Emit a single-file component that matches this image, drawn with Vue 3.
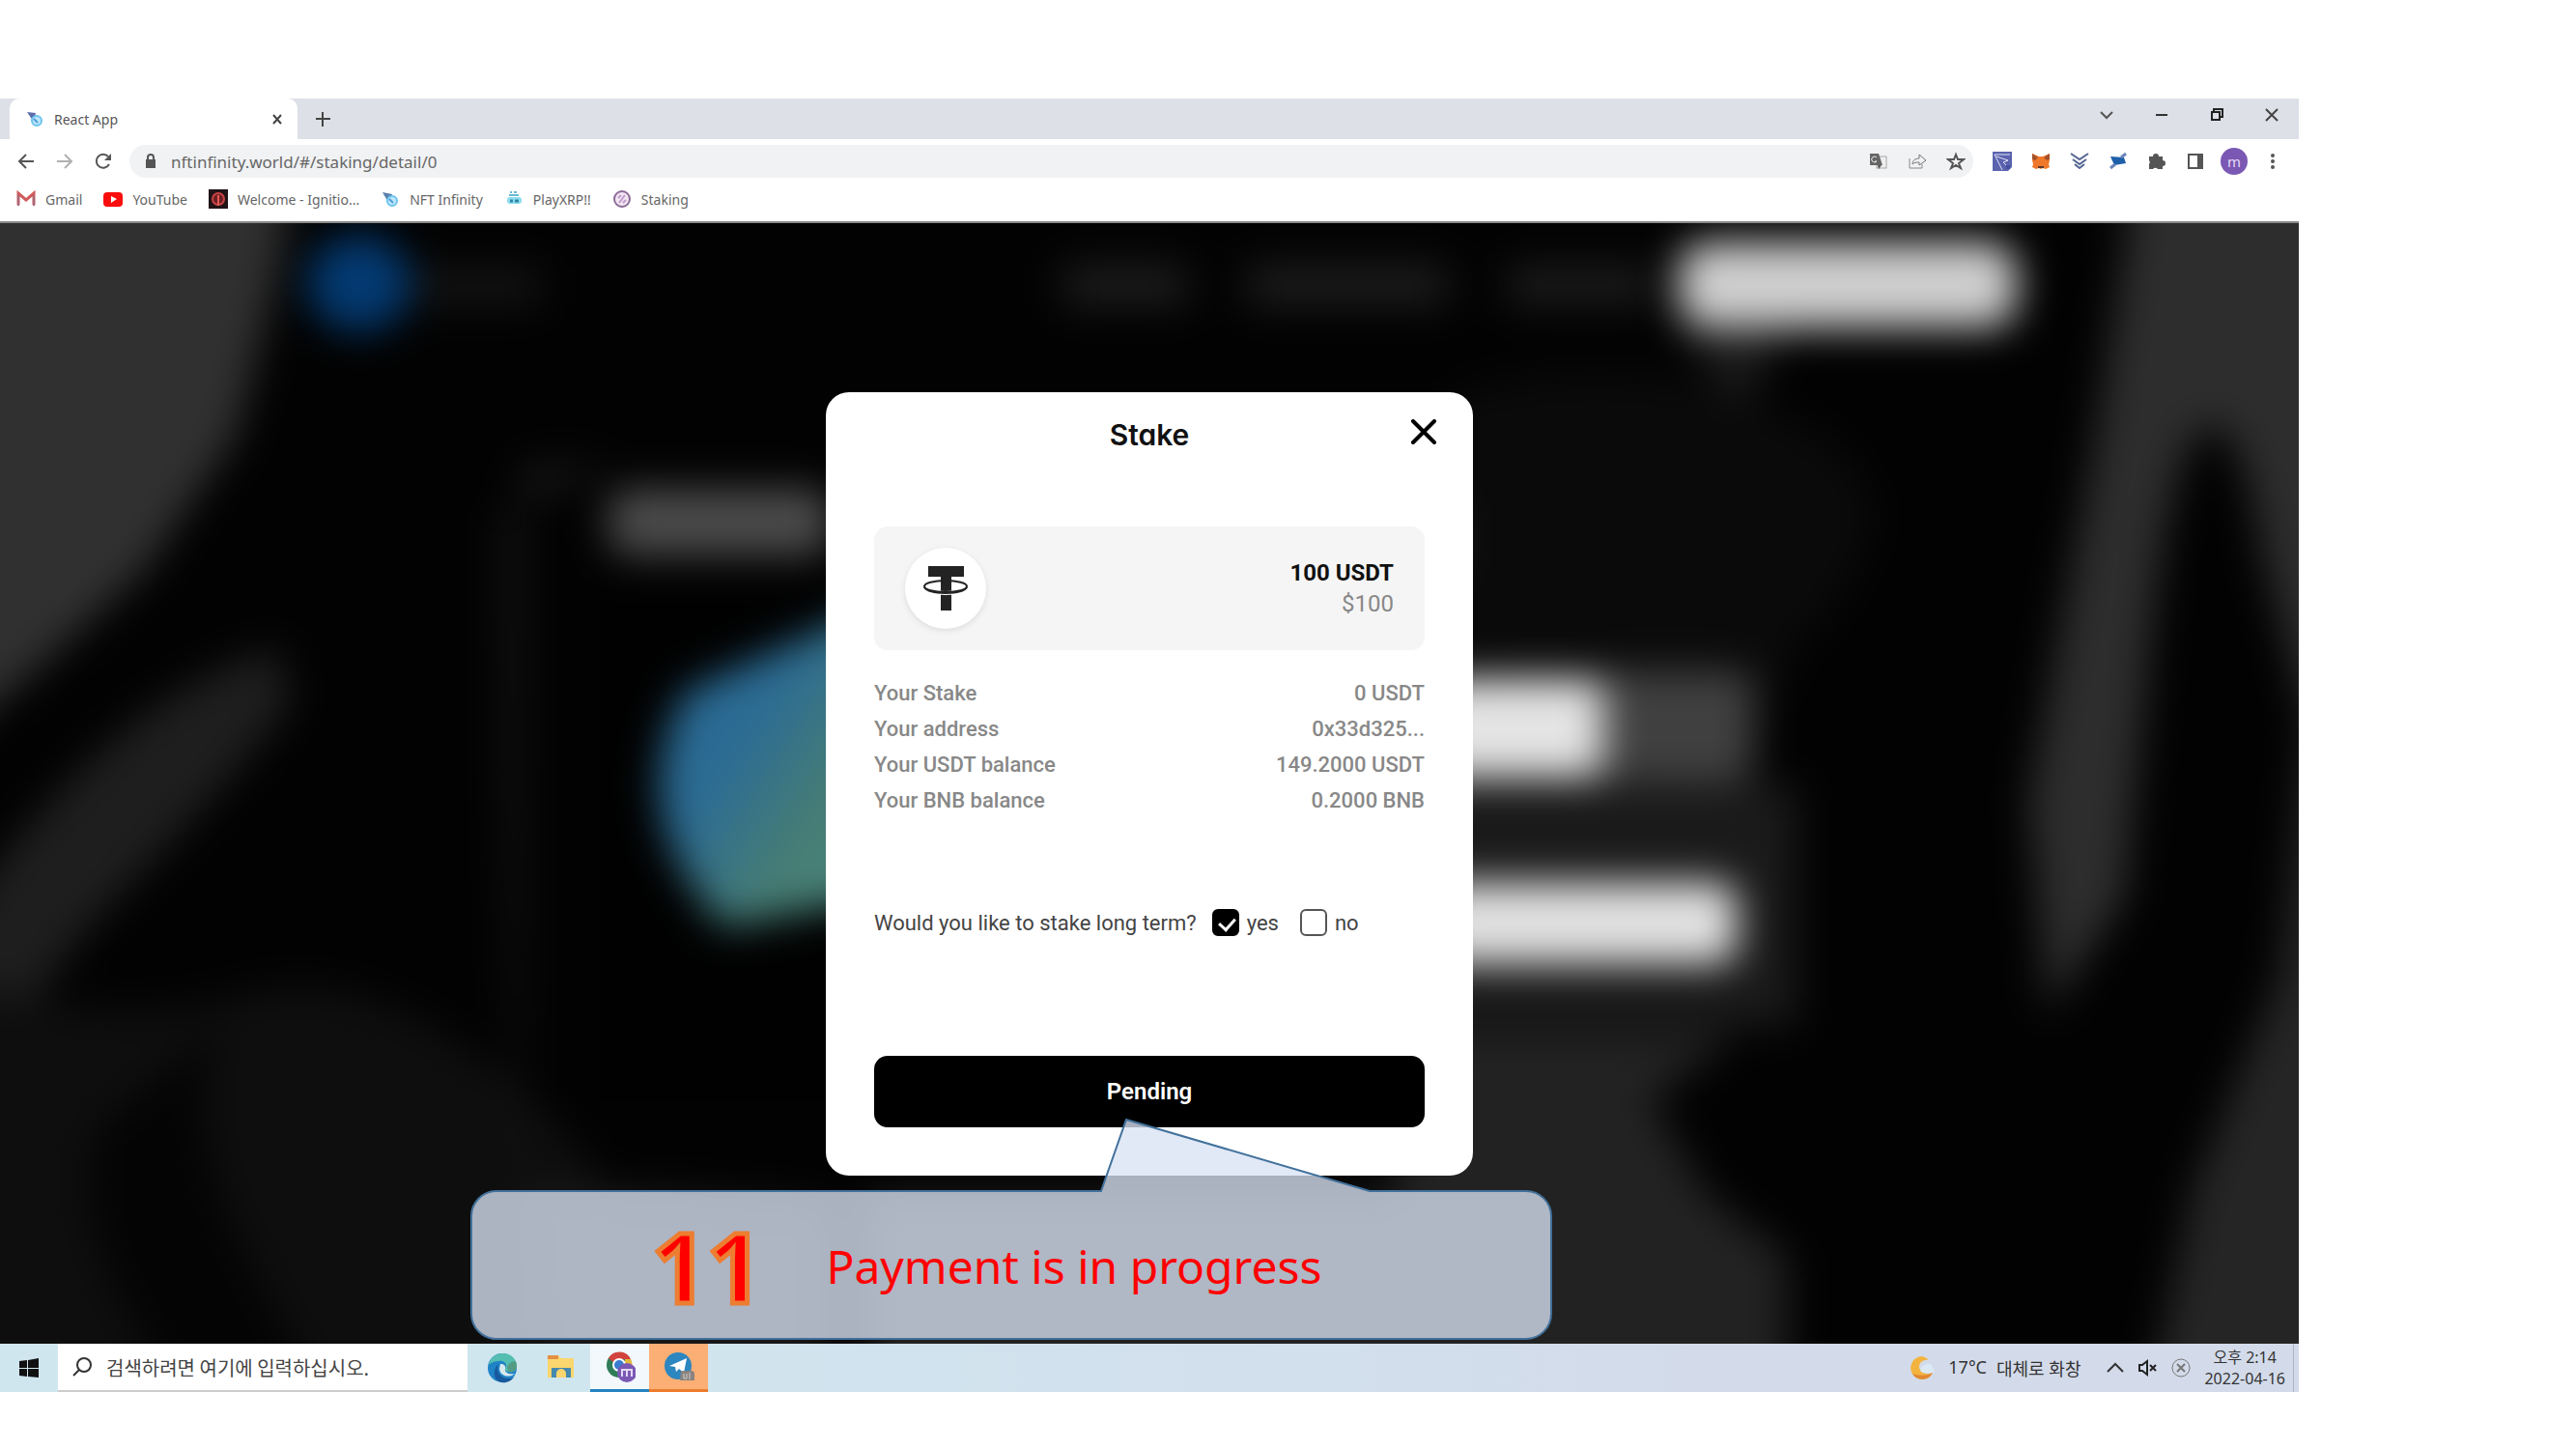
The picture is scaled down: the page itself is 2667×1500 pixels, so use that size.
<script setup>
import { ref } from 'vue'

const url = ref('nftinfinity.world/#/staking/detail/0')
const longTerm = ref(true)

const bookmarks = [
  { icon: 'gmail', label: 'Gmail' },
  { icon: 'youtube', label: 'YouTube' },
  { icon: 'ignition', label: 'Welcome - Ignitio...' },
  { icon: 'infinity', label: 'NFT Infinity' },
  { icon: 'play', label: 'PlayXRP!!' },
  { icon: 'staking', label: 'Staking' },
]

const details = [
  { label: 'Your Stake', value: '0 USDT' },
  { label: 'Your address', value: '0x33d325...' },
  { label: 'Your USDT balance', value: '149.2000 USDT' },
  { label: 'Your BNB balance', value: '0.2000 BNB' },
]
</script>

<template>
  <div class="desktop">
    <header class="browser">
      <div class="tabs">
        <div class="tab">
          <svg class="i20" viewBox="0 0 20 20"><path d="M2 3l9 1-2 9-3-4z" fill="#5d6cab" /><circle cx="12" cy="12" r="5" fill="#bfe6fa" stroke="#6cc4ee" stroke-width="2" /><path d="M9 10l4 4" stroke="#4b9ddb" stroke-width="2" /></svg>
          <span class="tab-title">React App</span>
          <button class="plain" aria-label="Close tab"><svg class="i20" viewBox="0 0 20 20"><path d="M6 6l8 9M14 6l-8 9" stroke="#444" stroke-width="2" /></svg></button>
        </div>
        <button class="plain new-tab" aria-label="New tab"><svg class="i20" viewBox="0 0 20 20"><path d="M10 3v15M3 10h15" stroke="#444" stroke-width="2" /></svg></button>
        <div class="window-buttons">
          <button class="plain" aria-label="Search tabs"><svg class="i20" viewBox="0 0 20 20"><path d="M4 7l6 6 6-6" fill="none" stroke="#555" stroke-width="2" /></svg></button>
          <button class="plain" aria-label="Minimize"><svg class="i20" viewBox="0 0 20 20"><path d="M4 10h12" stroke="#333" stroke-width="2" /></svg></button>
          <button class="plain" aria-label="Restore"><svg class="i20" viewBox="0 0 20 20"><path d="M5 7h8v8h-8zM7 7V4h9v8h-3" fill="none" stroke="#222" stroke-width="2" /></svg></button>
          <button class="plain" aria-label="Close window"><svg class="i20" viewBox="0 0 20 20"><path d="M4 4l12 12M16 4L4 16" stroke="#444" stroke-width="2" /></svg></button>
        </div>
      </div>

      <div class="toolbar">
        <button class="plain" aria-label="Back"><svg class="i20" viewBox="0 0 20 20"><path d="M18 10H3M10 3l-7 7 7 7" fill="none" stroke="#555" stroke-width="2" /></svg></button>
        <button class="plain" aria-label="Forward"><svg class="i20" viewBox="0 0 20 20"><path d="M2 10h15M10 3l7 7-7 7" fill="none" stroke="#b0b0b0" stroke-width="2" /></svg></button>
        <button class="plain" aria-label="Reload"><svg class="i20" viewBox="0 0 20 20"><path d="M16 13a7 7 0 1 1-1-8" fill="none" stroke="#555" stroke-width="2" /><path d="M18 2v7h-7z" fill="#555" /></svg></button>
        <div class="omnibox">
          <svg class="lock" viewBox="0 0 14 20"><rect x="2" y="8" width="10" height="9" fill="#555" /><path d="M4 8V6a3 3 0 0 1 6 0v2" fill="none" stroke="#555" stroke-width="2" /></svg>
          <input v-model="url" class="url" aria-label="Address" />
          <button class="plain" aria-label="Translate"><svg class="i20" viewBox="0 0 20 20"><rect x="8" y="5" width="10" height="12" fill="#eee" stroke="#aaa" /><path d="M1 2h9l4 12H1z" fill="#666" /><path d="M8 6a3 3 0 1 0 0 4H6" fill="none" stroke="#eee" stroke-width="1" /><path d="M9 14h4l-3 4z" fill="#555" /></svg></button>
          <button class="plain" aria-label="Share"><svg class="i20" viewBox="0 0 20 20"><path d="M2 7v10h13v-4" fill="none" stroke="#888" stroke-width="1" /><path d="M5 13c0-4 3-6 7-6V3l7 6-7 5v-3c-3 0-5 0-7 2z" fill="none" stroke="#777" stroke-width="1" /></svg></button>
          <button class="plain" aria-label="Bookmark this page"><svg class="i20" viewBox="0 0 20 20"><path d="M10 3l2 5 6 0-5 4 2 5-5-3-5 3 2-5-5-4 6 0z" fill="none" stroke="#555" stroke-width="2" /></svg></button>
        </div>
        <div class="extensions">
          <button class="plain" aria-label="Wallet extension"><svg class="i20" viewBox="0 0 20 20"><path d="M0 0h20v16l-4 4H0z" fill="#5b62ae" /><path d="M4 5l12 4-5 2 6 6M2 3l8 16M2 3h16" fill="none" stroke="#dfe2f6" stroke-width="1" /><path d="M14 14h4v4h-4z" fill="#4650a0" /></svg></button>
          <button class="plain" aria-label="MetaMask"><svg class="i20" viewBox="0 0 20 20"><path d="M1 2l7 3h4l7-3v7l-1 4 1 3-4 2-3-1-2 1-2-1-3 1-4-2 1-3-1-4z" fill="#f0782a" /><path d="M1 2l6 4-3 3-3-1zM19 2l-6 4 3 3 3-1z" fill="#a4512b" /><path d="M7 15h6v2H7z" fill="#5b3a35" /></svg></button>
          <button class="plain" aria-label="Chevron extension"><svg class="i20" viewBox="0 0 20 20"><path d="M1 2l9 6 9-6M3 8l7 5 7-5M5 13l5 4 5-4" fill="none" stroke="#536492" stroke-width="2" /></svg></button>
          <button class="plain" aria-label="Satellite extension"><svg class="i20" viewBox="0 0 20 20"><path d="M2 5l14 1 2 6-12 2z" fill="#1d5fa9" /><path d="M2 17l5-4M13 6l5-4" stroke="#6b84b9" stroke-width="3" /></svg></button>
          <button class="plain" aria-label="Extensions"><svg class="i20" viewBox="0 0 20 20"><path d="M2 5h4a3 3 0 1 1 6 0h4v4a3 3 0 1 1 0 6v3h-5a3 3 0 0 0-5 0H2v-5a3 3 0 0 0 0-4z" fill="#555" /></svg></button>
          <button class="plain" aria-label="Side panel"><svg class="i20" viewBox="0 0 20 20"><path d="M3 3h14v14H3z" fill="none" stroke="#555" stroke-width="2" /><path d="M12 3h6v14h-6z" fill="#555" /></svg></button>
          <button class="plain avatar" aria-label="Profile">m</button>
          <button class="plain" aria-label="Menu"><svg class="i20" viewBox="0 0 20 20"><g fill="#555"><circle cx="10" cy="4" r="2" /><circle cx="10" cy="10" r="2" /><circle cx="10" cy="16" r="2" /></g></svg></button>
        </div>
      </div>

      <nav class="bookmarks">
        <a v-for="b in bookmarks" :key="b.icon" href="#">
          <svg v-if="b.icon === 'gmail'" class="i20" viewBox="0 0 20 20"><path d="M2 16V4l8 7 8-7v12" fill="none" stroke="#d05a5a" stroke-width="3" /><path d="M2 17V6M18 17V6" stroke="#a8687a" stroke-width="2" /></svg>
          <svg v-else-if="b.icon === 'youtube'" class="i20" viewBox="0 0 20 20"><rect y="3" width="20" height="15" rx="4" fill="#fb0d0d" /><path d="M8 7l6 3-6 4z" fill="#fff" /></svg>
          <svg v-else-if="b.icon === 'ignition'" class="i20" viewBox="0 0 20 20"><path d="M0 0h20v20H0z" fill="#221317" /><circle cx="10" cy="10" r="6" fill="#6b1f22" stroke="#c94446" stroke-width="2" /><path d="M10 6v11" stroke="#e35a55" stroke-width="2" /></svg>
          <svg v-else-if="b.icon === 'infinity'" class="i20" viewBox="0 0 20 20"><path d="M2 3l10 2-3 9-3-4z" fill="#5a7fae" /><circle cx="12" cy="12" r="5" fill="#bfe6fa" stroke="#6cc4ee" stroke-width="2" /><path d="M9 10l4 4" stroke="#4b9ddb" stroke-width="2" /></svg>
          <svg v-else-if="b.icon === 'play'" class="i20" viewBox="0 0 20 20"><path d="M6 3h2M10 3h3M5 6h10" stroke="#69b9d6" stroke-width="2" /><rect x="3" y="8" width="15" height="7" rx="3" fill="#8ddcf0" /><path d="M6 12h3M11 12h4" stroke="#2f86a6" stroke-width="3" /></svg>
          <svg v-else class="i20" viewBox="0 0 20 20"><circle cx="10" cy="10" r="8" fill="#f3e6f3" stroke="#8c6b96" stroke-width="2" /><path d="M7 14l6-8M6 9l3-3M11 14l3-3" stroke="#c19acb" stroke-width="2" /></svg>
          <span>{{ b.label }}</span>
        </a>
      </nav>
    </header>

    <main class="page">
      <svg class="backdrop" viewBox="0 0 2380 1162" preserveAspectRatio="none" aria-hidden="true">
        <defs>
          <filter id="soft" x="-20%" y="-20%" width="140%" height="140%" color-interpolation-filters="sRGB"><feGaussianBlur stdDeviation="20" /></filter>
          <linearGradient id="cyan" x1="0" y1="0" x2="1" y2="1"><stop offset="0" stop-color="#256590" /><stop offset=".4" stop-color="#2c6c94" /><stop offset=".7" stop-color="#477d74" /><stop offset="1" stop-color="#4a8a80" /></linearGradient>
        </defs>
        <rect width="2380" height="1162" fill="#020202" />
        <g filter="url(#soft)">
          <rect x="-100" y="-100" width="2580" height="1362" fill="#020202" />
          <path d="M-80-80H310L285 60 245 220 150 360 30 470-80 560z" fill="#303030" />
          <path d="M290 440Q180 470 80 570T-60 760V1000Q20 800 120 700T300 500z" fill="#1e1e1e" />
          <path d="M-60 780Q120 840 250 800T540 900 600 1100V1240H-80z" fill="#0e0e0e" />
          <path d="M230 830Q180 920 260 1080T360 1200H180Q70 1060 100 940z" fill="#040404" />
          <path d="M640 250H540V1000Q700 1000 860 1020V1220H560Q520 900 520 300z" fill="#171717" />
          <rect x="620" y="390" width="300" height="520" fill="#010101" />
          <ellipse cx="372" cy="62" rx="54" ry="50" fill="#033a72" />
          <rect x="430" y="45" width="130" height="40" fill="#131313" />
          <rect x="1100" y="42" width="130" height="44" fill="#1c1c1c" />
          <rect x="1290" y="42" width="210" height="44" fill="#1c1c1c" />
          <rect x="1560" y="42" width="150" height="44" fill="#1a1a1a" />
          <rect x="1738" y="20" width="350" height="88" rx="30" fill="#cfcfcf" />
          <path d="M1740 110h110l-50 90z" fill="#1b1b1b" />
          <rect x="630" y="276" width="230" height="68" rx="20" fill="#4c4c4c" />
          <path d="M710 485L900 400V700L750 730Q640 610 710 485z" fill="url(#cyan)" />
          <path d="M1490 290h90v70h-90z" fill="#444" />
          <path d="M1500 180Q1680 120 1850 200T1860 440L1780 620 1500 440z" fill="#0a0a0a" />
          <rect x="1640" y="464" width="176" height="116" rx="20" fill="#404040" />
          <rect x="1480" y="472" width="180" height="104" rx="18" fill="#e4e4e4" />
          <rect x="1480" y="582" width="380" height="250" fill="#1a1a1a" />
          <rect x="1480" y="684" width="318" height="84" rx="20" fill="#e2e2e2" />
          <path d="M1420 840H1800L1710 910 1770 1010 1850 1070V1240H900V1010H1450z" fill="#222" />
          <path d="M2215-80L2170 220 2100 600 2120 820 2200 700 2230 400 2270 250 2330 300 2390 520H2460V-80z" fill="#2d2d2d" />
          <path d="M2390 500H2460V1240H2220L2270 1000 2360 780z" fill="#252525" />
          <ellipse cx="2290" cy="560" rx="66" ry="350" fill="#020202" />
        </g>
      </svg>

      <section class="modal" role="dialog" aria-labelledby="stake-title">
        <div class="modal-head">
          <h1 id="stake-title">Stake</h1>
          <button class="plain close" aria-label="Close"><svg class="i32" viewBox="0 0 32 32"><path d="M4 2l22 22M26 2L4 24" stroke="#000" stroke-width="4" stroke-linecap="round" /></svg></button>
        </div>

        <div class="token">
          <div class="coin">
            <svg viewBox="0 0 48 48" width="48" height="48">
              <path d="M6 1h37v11H30v25h0v10H19V12H6z" fill="#232323" />
              <ellipse cx="24" cy="23" rx="22" ry="6" fill="none" stroke="#fff" stroke-width="4" />
              <path d="M19 12h11v12H19z" fill="#232323" />
              <ellipse cx="24" cy="22" rx="22" ry="6" fill="none" stroke="#232323" stroke-width="2" />
              <path d="M2 23q4 6 22 6t22-6" fill="none" stroke="#232323" stroke-width="2" />
            </svg>
          </div>
          <div class="amounts">
            <strong>100 USDT</strong>
            <span>$100</span>
          </div>
        </div>

        <dl class="details">
          <div v-for="d in details" :key="d.label">
            <dt>{{ d.label }}</dt>
            <dd>{{ d.value }}</dd>
          </div>
        </dl>

        <div class="term">
          <span>Would you like to stake long term?</span>
          <label><input type="checkbox" :checked="longTerm" @change="longTerm = true" />yes</label>
          <label><input type="checkbox" :checked="!longTerm" @change="longTerm = false" />no</label>
        </div>

        <button class="pending">Pending</button>
      </section>

      <aside class="callout">
        <svg class="bubble" viewBox="0 0 1120 230" aria-hidden="true"><path d="M26 76H653L679 2 931 76H1093A26 26 0 0 1 1119 102V203A26 26 0 0 1 1093 229H26A26 26 0 0 1 1 203V102A26 26 0 0 1 26 76z" fill="#d9e2f3" fill-opacity=".78" stroke="#41719c" stroke-width="2" /></svg>
        <span class="step">11</span>
        <span class="message">Payment is in progress</span>
      </aside>
    </main>

    <footer class="taskbar">
      <button class="plain start" aria-label="Start"><svg class="i20" viewBox="0 0 20 20"><path d="M0 3l8-1v8H0zM9 2l11-2v10H9zM0 11h8v8l-8-1zM9 11h11v9L9 19z" fill="#111" /></svg></button>
      <label class="search">
        <svg class="i20" viewBox="0 0 20 20"><circle cx="12" cy="8" r="7" fill="none" stroke="#333" stroke-width="2" /><path d="M7 13l-6 6" stroke="#333" stroke-width="2" /></svg>
        <input aria-label="검색" placeholder="검색하려면 여기에 입력하십시오." />
      </label>
      <button class="plain app" aria-label="Edge"><svg class="i32" viewBox="0 0 32 32"><circle cx="16" cy="16" r="15" fill="#1f83c6" /><path d="M2 13C4 4 11 1 17 1c9 0 14 7 14 13 0 5-4 7-9 6-3-1-4-2-2-5 1-4-3-7-8-6-5 0-8 2-10 4z" fill="#54bfb1" /><path d="M22 20c5 1 9-1 9-6l-1-5c-4 0-8 3-9 6z" fill="#549b83" /><path d="M12 12c-3 7 2 16 12 15 3 0 4-2 5-3-3 6-9 8-14 7C6 29 6 17 12 12z" fill="#17599d" /><path d="M14 12c4 0 6 2 5 5-1 4 4 6 10 5-4 4-15 4-16-5z" fill="#d6e8ee" /></svg></button>
      <button class="plain app" aria-label="File Explorer"><svg class="i32" viewBox="0 0 32 32"><path d="M2 3h11l3 3h13v20H2z" fill="#fbd56d" /><path d="M2 3h11v4H2z" fill="#e58f43" /><path d="M6 26V16h20v10h-5v-4a5 5 0 0 0-10 0v4z" fill="#4689ae" /></svg></button>
      <button class="plain app active" aria-label="Chrome"><svg class="i32" viewBox="0 0 32 32"><circle cx="15" cy="14" r="13" fill="#2f7d58" /><path d="M4 7A13 13 0 0 1 27 8H15a6 6 0 0 0-5 4z" fill="#d2433e" /><path d="M27 8a13 13 0 0 1-9 19l3-10V8z" fill="#e6b83c" /><circle cx="15" cy="14" r="6" fill="#3b7bd1" stroke="#fff" stroke-width="2" /><circle cx="23" cy="22" r="10" fill="#7b58b4" /><path d="M18 26v-7h5v7m0-7h5v7" fill="none" stroke="#e4d8f4" stroke-width="2" /></svg></button>
      <button class="plain app alert" aria-label="Telegram"><svg class="i32" viewBox="0 0 32 32"><circle cx="15" cy="15" r="14" fill="#2c86bf" /><path d="M6 15l18-8-3 15-5-4-3 3-1-5z" fill="#fff" /><path d="M18 20h12l3 3v7H17z" fill="#8b8380" /><path d="M21 23v5h3v-5M27 22v7" fill="none" stroke="#ccc" stroke-width="1" /></svg></button>
      <div class="tray">
        <svg class="moon" viewBox="0 0 26 26"><path d="M13 1A12 12 0 1 0 24 18C18 21 10 18 10 12 10 7 15 4 20 5A12 12 0 0 0 13 1z" fill="#f3b43f" /><path d="M3 19A12 12 0 0 0 24 18C17 22 8 21 3 19z" fill="#e08834" /><path d="M12 17a4 4 0 0 1 3-6 5 5 0 0 1 9 2 3 3 0 0 1 0 5H14z" fill="#dbe9f5" /></svg>
        <span class="weather"><span>17°C</span><span>대체로 화창</span></span>
        <button class="plain" aria-label="Show hidden icons"><svg class="i20" viewBox="0 0 20 20"><path d="M2 14l8-8 8 8" fill="none" stroke="#333" stroke-width="2" /></svg></button>
        <button class="plain" aria-label="Muted"><svg class="i20" viewBox="0 0 20 20"><path d="M1 7h3l5-4v14l-5-4H1z" fill="none" stroke="#222" stroke-width="2" /><path d="M12 7l6 6M18 7l-6 6" stroke="#222" stroke-width="2" /></svg></button>
        <button class="plain" aria-label="Notification"><svg class="i20" viewBox="0 0 20 20"><circle cx="10" cy="10" r="9" fill="none" stroke="#777" stroke-width="1" /><path d="M6 6l8 8M14 6l-8 8" stroke="#777" stroke-width="2" /></svg></button>
        <time class="clock"><span>오후 2:14</span><span>2022-04-16</span></time>
      </div>
    </footer>
  </div>
</template>

<style>
body {
  background: #fff;
}
</style>

<style scoped>
* {
  box-sizing: border-box;
}
.desktop {
  margin: 102px 287px 58px 0;
  font-family: "Noto Sans", "Noto Sans CJK KR", sans-serif;
  color: #555;
  font-size: 15px;
}
svg {
  display: block;
  flex: none;
}
.i20 {
  width: 20px;
  height: 20px;
}
.i32 {
  width: 32px;
  height: 32px;
}
.plain {
  display: flex;
  align-items: center;
  justify-content: center;
  padding: 0;
  border: 0;
  background: none;
  font: inherit;
}

/* Browser chrome */
.tabs {
  display: flex;
  align-items: center;
  height: 42px;
  padding: 0 18px 0 10px;
  background: #dde0e6;
}
.tab {
  display: flex;
  align-items: center;
  gap: 10px;
  align-self: stretch;
  width: 298px;
  padding: 0 11px 0 16px;
  border-radius: 10px 10px 0 0;
  background: #fff;
}
.tab-title {
  flex: 1;
  font-size: 14px;
}
.new-tab {
  margin-left: 16px;
}
.window-buttons {
  display: flex;
  gap: 37px;
  margin-left: auto;
  margin-bottom: 8px;
}
.toolbar {
  display: flex;
  align-items: center;
  gap: 20px;
  height: 46px;
  padding: 0 17px;
  background: #fff;
}
.omnibox {
  display: flex;
  flex: 1;
  align-items: center;
  gap: 20px;
  height: 34px;
  margin-left: -3px;
  padding: 0 8px 0 15px;
  border-radius: 17px;
  background: #f1f2f4;
}
.lock {
  width: 14px;
  height: 20px;
}
.url {
  flex: 1;
  min-width: 0;
  margin-left: -6px;
  padding: 0;
  border: 0;
  background: none;
  color: #666;
  font: 17px "Noto Sans", sans-serif;
}
.extensions {
  display: flex;
  align-items: center;
  gap: 20px;
}
.avatar {
  width: 28px;
  height: 28px;
  margin: 0 -4px;
  border-radius: 50%;
  background: #7b58b4;
  color: #e4d8f4;
}
.bookmarks {
  display: flex;
  gap: 22px;
  height: 41px;
  padding: 6px 17px 0;
  border-bottom: 2px solid #8a8a8a;
  background: #fff;
}
.bookmarks a {
  display: flex;
  gap: 10px;
  height: 20px;
  align-items: center;
  color: #666;
  font-size: 14px;
  text-decoration: none;
}

/* Page and dialog */
.page {
  position: relative;
  padding: 175px 0 174px;
  overflow: hidden;
  background: #020202;
  font-family: Roboto, sans-serif;
}
.backdrop {
  position: absolute;
  inset: 0;
  width: 100%;
  height: 100%;
}
.modal {
  position: relative;
  width: 670px;
  margin: 0 auto;
  padding: 24px 50px 50px;
  border-radius: 24px;
  background: #fff;
}
.modal-head {
  display: grid;
  grid-template-columns: 32px 1fr 32px;
  align-items: center;
  margin: 0 -16px 75px;
}
h1 {
  grid-column: 2;
  margin: 0;
  color: #111;
  font: 600 30px/40px Inter, sans-serif;
  font-feature-settings: "cv11";
  text-align: center;
}
.token {
  display: flex;
  align-items: center;
  justify-content: space-between;
  height: 128px;
  padding: 0 32px;
  border-radius: 14px;
  background: #f5f5f5;
}
.coin {
  display: flex;
  align-items: center;
  justify-content: center;
  width: 84px;
  height: 84px;
  border-radius: 50%;
  background: #fff;
  box-shadow: 0 2px 6px #0000001a;
}
.amounts {
  display: flex;
  flex-direction: column;
  color: #888;
  font-size: 24px;
  line-height: 32px;
  text-align: right;
}
.amounts strong {
  color: #111;
}
.details {
  margin: 26px 0 88px;
  color: #888;
  font-size: 22px;
  font-weight: 500;
  line-height: 37px;
}
.details div {
  display: flex;
  justify-content: space-between;
}
.details dd {
  margin: 0;
}
.term {
  display: flex;
  align-items: center;
  height: 40px;
  margin-bottom: 118px;
  color: #444;
  font-size: 22px;
}
.term label {
  display: flex;
  align-items: center;
  gap: 8px;
  margin-left: 16px;
}
.term label + label {
  margin-left: 22px;
}
.term input {
  position: relative;
  appearance: none;
  width: 28px;
  height: 28px;
  margin: 0;
  border: 2px solid #555;
  border-radius: 6px;
}
.term input:checked {
  border-color: #000;
  background: #000;
}
.term input:checked::after {
  content: "";
  position: absolute;
  top: 4px;
  left: 8px;
  width: 8px;
  height: 13px;
  border: solid #fff;
  border-width: 0 3px 3px 0;
  transform: rotate(42deg);
}
.pending {
  display: block;
  width: 100%;
  height: 74px;
  border: 0;
  border-radius: 14px;
  background: #000;
  color: #fff;
  font: 600 24px Roboto, sans-serif;
}

/* Annotation bubble over the page */
.callout {
  position: absolute;
  bottom: 4px;
  left: calc(50% - 703px);
  display: flex;
  align-items: center;
  gap: 66px;
  width: 1120px;
  height: 154px;
  padding-left: 188px;
  color: #f00;
  font-family: "Noto Sans", sans-serif;
  white-space: nowrap;
}
.bubble {
  position: absolute;
  bottom: 0;
  left: 0;
  width: 1120px;
  height: 230px;
}
.step,
.message {
  position: relative;
}
.step {
  font-size: 100px;
  font-weight: 700;
  line-height: 154px;
  -webkit-text-stroke: 5px #ed7d31;
}
.message {
  font-size: 48px;
}

/* Taskbar */
.taskbar {
  display: flex;
  height: 50px;
  background: linear-gradient(90deg, #d0e6ef 25%, #d3dbea 75%);
  color: #333;
}
.start {
  width: 60px;
}
.search {
  display: flex;
  align-items: center;
  gap: 15px;
  width: 424px;
  margin-right: 5px;
  padding-left: 15px;
  border-bottom: 2px solid #ccc;
  background: #fff;
}
.search input {
  flex: 1;
  min-width: 0;
  padding: 0;
  border: 0;
  font: 20px "Noto Sans CJK KR", sans-serif;
}
.search input::placeholder {
  color: #444;
}
.app {
  width: 61px;
}
.active {
  border-bottom: 3px solid #2583c0;
  background: #f2f8fb;
}
.alert {
  border-bottom: 3px solid #ee7b2c;
  background: #fbaf74;
}
.tray {
  display: flex;
  align-items: center;
  gap: 14px;
  margin: 0 5px 0 auto;
  padding-right: 8px;
  border-right: 1px solid #b0b6c4;
}
.moon {
  width: 26px;
  height: 26px;
}
.weather {
  display: flex;
  gap: 10px;
  margin-right: 12px;
  font-size: 18px;
}
.clock {
  display: flex;
  flex-direction: column;
  align-items: center;
  font-size: 16px;
  line-height: 22px;
}
</style>
